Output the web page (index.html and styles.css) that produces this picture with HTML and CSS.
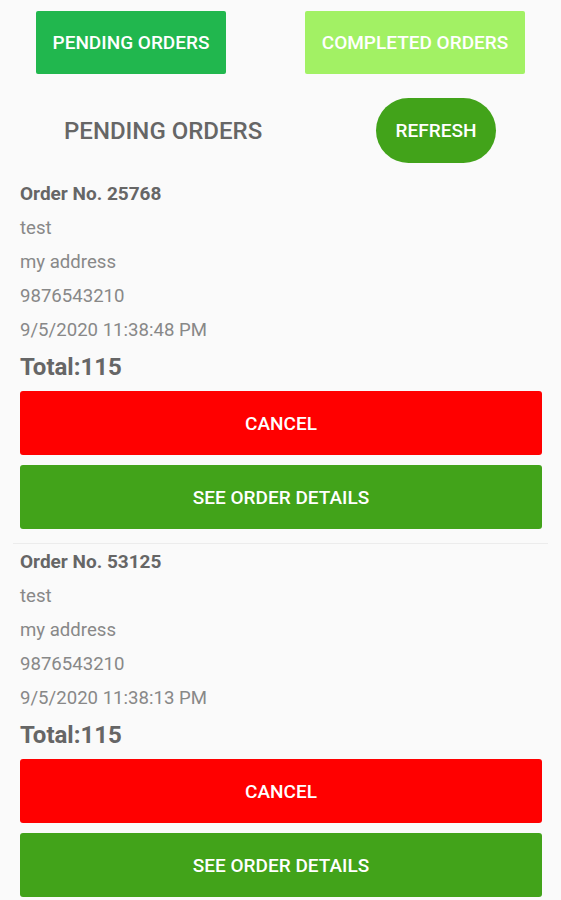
FILE: index.html
```html
<!DOCTYPE html>
<html>
<head>
    <title>Pending Orders</title>
    <link rel="stylesheet" href="styles.css">
</head>
<body>
    <div class="tabs">
        <button class="tab tab-active">PENDING ORDERS</button>
        <button class="tab tab-done">COMPLETED ORDERS</button>
    </div>

    <div class="header">
        <h1>PENDING ORDERS</h1>
        <button class="refresh">REFRESH</button>
    </div>

    <div class="orders">
        <div class="order">
            <div class="order-no">Order No. 25768</div>
            <div class="line">test</div>
            <div class="line">my address</div>
            <div class="line">9876543210</div>
            <div class="line">9/5/2020 11:38:48 PM</div>
            <div class="total">Total:115</div>
            <button class="btn btn-cancel">CANCEL</button>
            <button class="btn btn-details">SEE ORDER DETAILS</button>
        </div>

        <div class="order">
            <div class="order-no">Order No. 53125</div>
            <div class="line">test</div>
            <div class="line">my address</div>
            <div class="line">9876543210</div>
            <div class="line">9/5/2020 11:38:13 PM</div>
            <div class="total">Total:115</div>
            <button class="btn btn-cancel">CANCEL</button>
            <button class="btn btn-details">SEE ORDER DETAILS</button>
        </div>
    </div>
</body>
</html>
```

FILE: styles.css
```css
body {
    font-family: Roboto, "Liberation Sans", sans-serif;
    background-color: #fafafa;
    margin: 0;
    padding: 0;
    overflow: hidden;
}
button {
    font-family: inherit;
    border: none;
    color: #fff;
    font-weight: 500;
    cursor: pointer;
}
.tabs {
    display: flex;
    padding-top: 11px;
}
.tab {
    height: 63px;
    font-size: 19px;
    border-radius: 2px;
    padding: 0;
}
.tab-active {
    width: 190px;
    margin-left: 36px;
    background-color: #21b74e;
}
.tab-done {
    width: 220px;
    margin-left: 79px;
    background-color: #a2f164;
}
.header {
    display: flex;
    align-items: center;
    margin-top: 24px;
    height: 65px;
}
h1 {
    margin: 0 0 0 64px;
    width: 312px;
    font-size: 24px;
    font-weight: 500;
    color: #666;
}
.refresh {
    width: 120px;
    height: 65px;
    border-radius: 33px;
    background-color: #42a31a;
    font-size: 19px;
    padding: 0;
}
.orders {
    margin-top: 14px;
}
.order {
    margin: 0 13px;
    padding: 0 6px 14px 7px;
    border-bottom: 1px solid #ececec;
}
.order + .order {
    padding-top: 1px;
}
.order-no {
    font-size: 19px;
    font-weight: 700;
    color: #666;
    line-height: 34px;
}
.line {
    font-size: 18.6px;
    color: #888;
    line-height: 34px;
}
.total {
    font-size: 24px;
    font-weight: 700;
    color: #666;
    line-height: 40px;
}
.btn {
    display: block;
    width: 100%;
    height: 64px;
    border-radius: 3px;
    font-size: 19px;
    margin-top: 10px;
}
.btn-cancel {
    margin-top: 4px;
    background-color: #ff0000;
}
.btn-details {
    background-color: #42a31a;
}
```
